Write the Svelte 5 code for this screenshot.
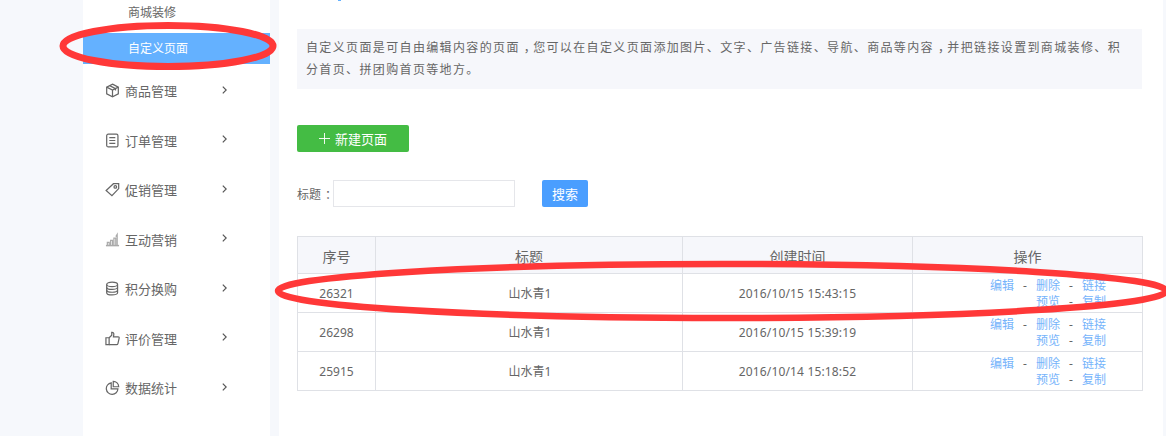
<script>
	const menus = [
		{ name: '商品管理', icon: 'box' },
		{ name: '订单管理', icon: 'order' },
		{ name: '促销管理', icon: 'tag' },
		{ name: '互动营销', icon: 'chart' },
		{ name: '积分换购', icon: 'coins' },
		{ name: '评价管理', icon: 'thumb' },
		{ name: '数据统计', icon: 'pie' }
	];

	const rows = [
		{ id: 26321, title: '山水青1', time: '2016/10/15 15:43:15' },
		{ id: 26298, title: '山水青1', time: '2016/10/15 15:39:19' },
		{ id: 25915, title: '山水青1', time: '2016/10/14 15:18:52' }
	];
</script>

<div class="page">
	<div class="gutter"></div>

	<aside class="sidebar">
		<div class="sub-item">商城装修</div>
		<div class="sub-item active">自定义页面</div>
		<nav class="menu">
			{#each menus as menu}
				<div class="menu-item">
					<svg class="menu-icon" viewBox="0 0 16 16" fill="none" stroke="#666" stroke-width="1.3">
						{#if menu.icon === 'box'}
							<path d="M8 1.2 14.2 4.4V11.6L8 14.8 1.8 11.6V4.4Z" />
							<path d="M1.8 4.4 8 7.6 14.2 4.4M8 7.6V14.8M5 2.8 11.2 6V8" />
						{:else if menu.icon === 'order'}
							<rect x="1.8" y="1.2" width="12" height="13.6" rx="1.6" />
							<path d="M4.6 5H11M4.6 8H11M4.6 11H11" />
						{:else if menu.icon === 'tag'}
							<path d="M9 1.8H14.6V7L7.4 14.6 1.2 9Z" />
							<circle cx="11" cy="5.2" r="1.4" />
						{:else if menu.icon === 'chart'}
							<path d="M1 14.5H15" stroke="#aaa" stroke-width="1.6" />
							<path d="M2.5 14V11H4.5V14M6 14V9H8V14M9.5 14V6.5H11.5V14M13 14V2.5L11.5 5" stroke="#aaa" />
						{:else if menu.icon === 'coins'}
							<ellipse cx="7.6" cy="3.6" rx="5.8" ry="2.4" />
							<path d="M1.8 3.6V12.4C1.8 13.7 4.4 14.8 7.6 14.8S13.4 13.7 13.4 12.4V3.6" />
							<path d="M1.8 6.6C1.8 7.9 4.4 9 7.6 9S13.4 7.9 13.4 6.6M1.8 9.6C1.8 10.9 4.4 12 7.6 12S13.4 10.9 13.4 9.6" />
						{:else if menu.icon === 'thumb'}
							<path d="M1 7.2H4.4V14.6H1Z" />
							<path d="M4.4 7.2 7.2 4.4V1.4C8.8 1.2 9.6 2.4 9.4 3.8L9 6.2H14C14.8 6.2 15.3 6.9 15.1 7.6L13.8 13.4C13.6 14.2 13 14.6 12.3 14.6H4.4" />
						{:else if menu.icon === 'pie'}
							<path d="M6.6 3A6.2 6.2 0 1 0 13.8 9.4H6.6Z" />
							<path d="M8.8 1.4A5.8 5.8 0 0 1 14.6 7.2H8.8Z" />
						{/if}
					</svg>
					<span class="menu-name">{menu.name}</span>
					<svg class="chevron" viewBox="0 0 5 8" fill="none" stroke="#555" stroke-width="1.2">
						<path d="M.8 .6 4.2 4 .8 7.4" />
					</svg>
				</div>
			{/each}
		</nav>
	</aside>

	<div class="divider"></div>

	<main class="main">
		<div class="clipped-tail"></div>
		<p class="notice">自定义页面是可自由编辑内容的页面<span class="mid-punct">，</span>您可以在自定义页面添加图片、文字、广告链接、导航、商品等内容<span class="mid-punct">，</span>并把链接设置到商城装修、积<br />分首页、拼团购首页等地方。</p>

		<button class="btn-new">
			<svg class="plus" viewBox="0 0 12 12" fill="none" stroke="#fff" stroke-width="1">
				<path d="M6 0V12M0 6H12" />
			</svg>
			新建页面
		</button>

		<div class="search">
			<label class="search-label" for="title">标题<span class="mid-colon">：</span></label>
			<input id="title" class="search-input" type="text" />
			<button class="btn-search">搜索</button>
		</div>

		<table class="list">
			<thead>
				<tr>
					<th class="col-id">序号</th>
					<th class="col-title">标题</th>
					<th class="col-time">创建时间</th>
					<th>操作</th>
				</tr>
			</thead>
			<tbody>
				{#each rows as row}
					<tr>
						<td>{row.id}</td>
						<td class="title">{row.title}</td>
						<td class="time">{row.time}</td>
						<td class="actions">
							<div class="action-line">
								<a href="#edit">编辑</a><span class="sep">-</span><a href="#del">删除</a><span class="sep">-</span><a href="#link">链接</a>
							</div>
							<div class="action-line">
								<a href="#preview">预览</a><span class="sep">-</span><a href="#copy">复制</a>
							</div>
						</td>
					</tr>
				{/each}
			</tbody>
		</table>
	</main>

	<div class="edge"></div>

	<svg class="marks" viewBox="0 0 1166 436" fill="none" stroke="#ff3838">
		<ellipse cx="168" cy="46" rx="105" ry="20.5" stroke-width="7" />
		<ellipse cx="722" cy="291" rx="444" ry="27" stroke-width="6.5" />
	</svg>
</div>

<style>
	:global(body) {
		margin: 0;
		background: #f6f8fc;
	}

	.page {
		position: relative;
		display: flex;
		width: 1166px;
		height: 436px;
		overflow: hidden;
		font-family: 'Noto Sans', 'Noto Sans CJK SC', sans-serif;
		color: #666;
		background: #f6f8fc;
	}

	.gutter {
		width: 83px;
		flex-shrink: 0;
	}

	.sidebar {
		width: 187px;
		flex-shrink: 0;
		background: #fff;
		margin-top: -3px;
	}

	.sub-item {
		height: 31px;
		line-height: 31px;
		padding-left: 45px;
		margin-bottom: 5px;
		font-size: 12px;
	}

	.sub-item.active {
		background: #64b1ff;
		color: #fff;
		margin-bottom: 0;
	}

	.menu {
		padding-top: 2px;
	}

	.menu-item {
		display: flex;
		align-items: center;
		height: 49.5px;
		padding-left: 22px;
		font-size: 13px;
	}

	.menu-icon {
		width: 15px;
		height: 15px;
		flex-shrink: 0;
	}

	.menu-name {
		width: 52px;
		margin-left: 5px;
		margin-right: 45px;
	}

	.chevron {
		width: 5px;
		height: 8px;
		margin-top: -2px;
	}

	.divider {
		width: 9px;
		flex-shrink: 0;
	}

	.main {
		width: 884px;
		flex-shrink: 0;
		box-sizing: border-box;
		background: #fff;
		padding: 0 21px 0 18px;
	}

	/* bottom of a heading that is scrolled off the top */
	.clipped-tail {
		width: 3px;
		height: 1px;
		margin: 0 0 28px 41px;
		background: #64b1ff;
	}

	.notice {
		margin: 0 0 36px;
		height: 60px;
		box-sizing: border-box;
		padding: 8px 9px;
		background: #f6f7fb;
		font-size: 12px;
		line-height: 22px;
		letter-spacing: 1.36px;
	}

	/* the reference sets these marks in the middle of their full-width cell */
	.mid-punct {
		padding-left: 4px;
		letter-spacing: -2.64px;
	}

	.mid-colon {
		padding-left: 4px;
		letter-spacing: -4px;
	}

	.btn-new {
		display: flex;
		align-items: center;
		justify-content: center;
		width: 112px;
		height: 27px;
		padding: 0;
		border: 0;
		border-radius: 2px;
		background: #44bc44;
		color: #fff;
		font-family: inherit;
		font-size: 13px;
	}

	.plus {
		width: 11px;
		height: 11px;
		margin-right: 5px;
	}

	.search {
		display: flex;
		align-items: center;
		height: 27px;
		margin: 28px 0 29px;
		font-size: 12px;
	}

	.search-label {
		width: 36px;
		white-space: nowrap;
	}

	.search-input {
		width: 182px;
		height: 27px;
		box-sizing: border-box;
		border: 1px solid #e5e6ea;
		background: #fff;
		margin: 0 27px 0 0;
	}

	.btn-search {
		width: 46px;
		height: 27px;
		padding: 0;
		border: 0;
		border-radius: 2px;
		background: #4a9eff;
		color: #fff;
		font-family: inherit;
		font-size: 13px;
	}

	.list {
		width: 846px;
		border-collapse: collapse;
		table-layout: fixed;
		font-size: 12px;
		text-align: center;
	}

	.list th,
	.list td {
		border: 1px solid #dfe1e6;
		padding: 0;
	}

	.list th {
		height: 34px;
		padding-top: 2px;
		background: #f6f7fb;
		font-size: 14px;
		font-weight: 400;
	}

	.list td {
		height: 38px;
	}

	.col-id {
		width: 77px;
	}

	.col-title {
		width: 306px;
	}

	.col-time {
		width: 229px;
	}

	.list td.title {
		padding-left: 2px;
	}

	.list td.time {
		letter-spacing: 0.15px;
	}

	.list td.actions {
		padding: 4px 36px 0 0;
		line-height: 16px;
		vertical-align: top;
		box-sizing: border-box;
	}

	.action-line {
		display: flex;
		justify-content: flex-end;
	}

	.action-line a {
		color: #76b4fb;
		text-decoration: none;
	}

	.sep {
		width: 22px;
		text-align: center;
	}

	.edge {
		width: 3px;
		flex-shrink: 0;
	}

	.marks {
		position: absolute;
		inset: 0;
		width: 1166px;
		height: 436px;
		pointer-events: none;
	}
</style>
